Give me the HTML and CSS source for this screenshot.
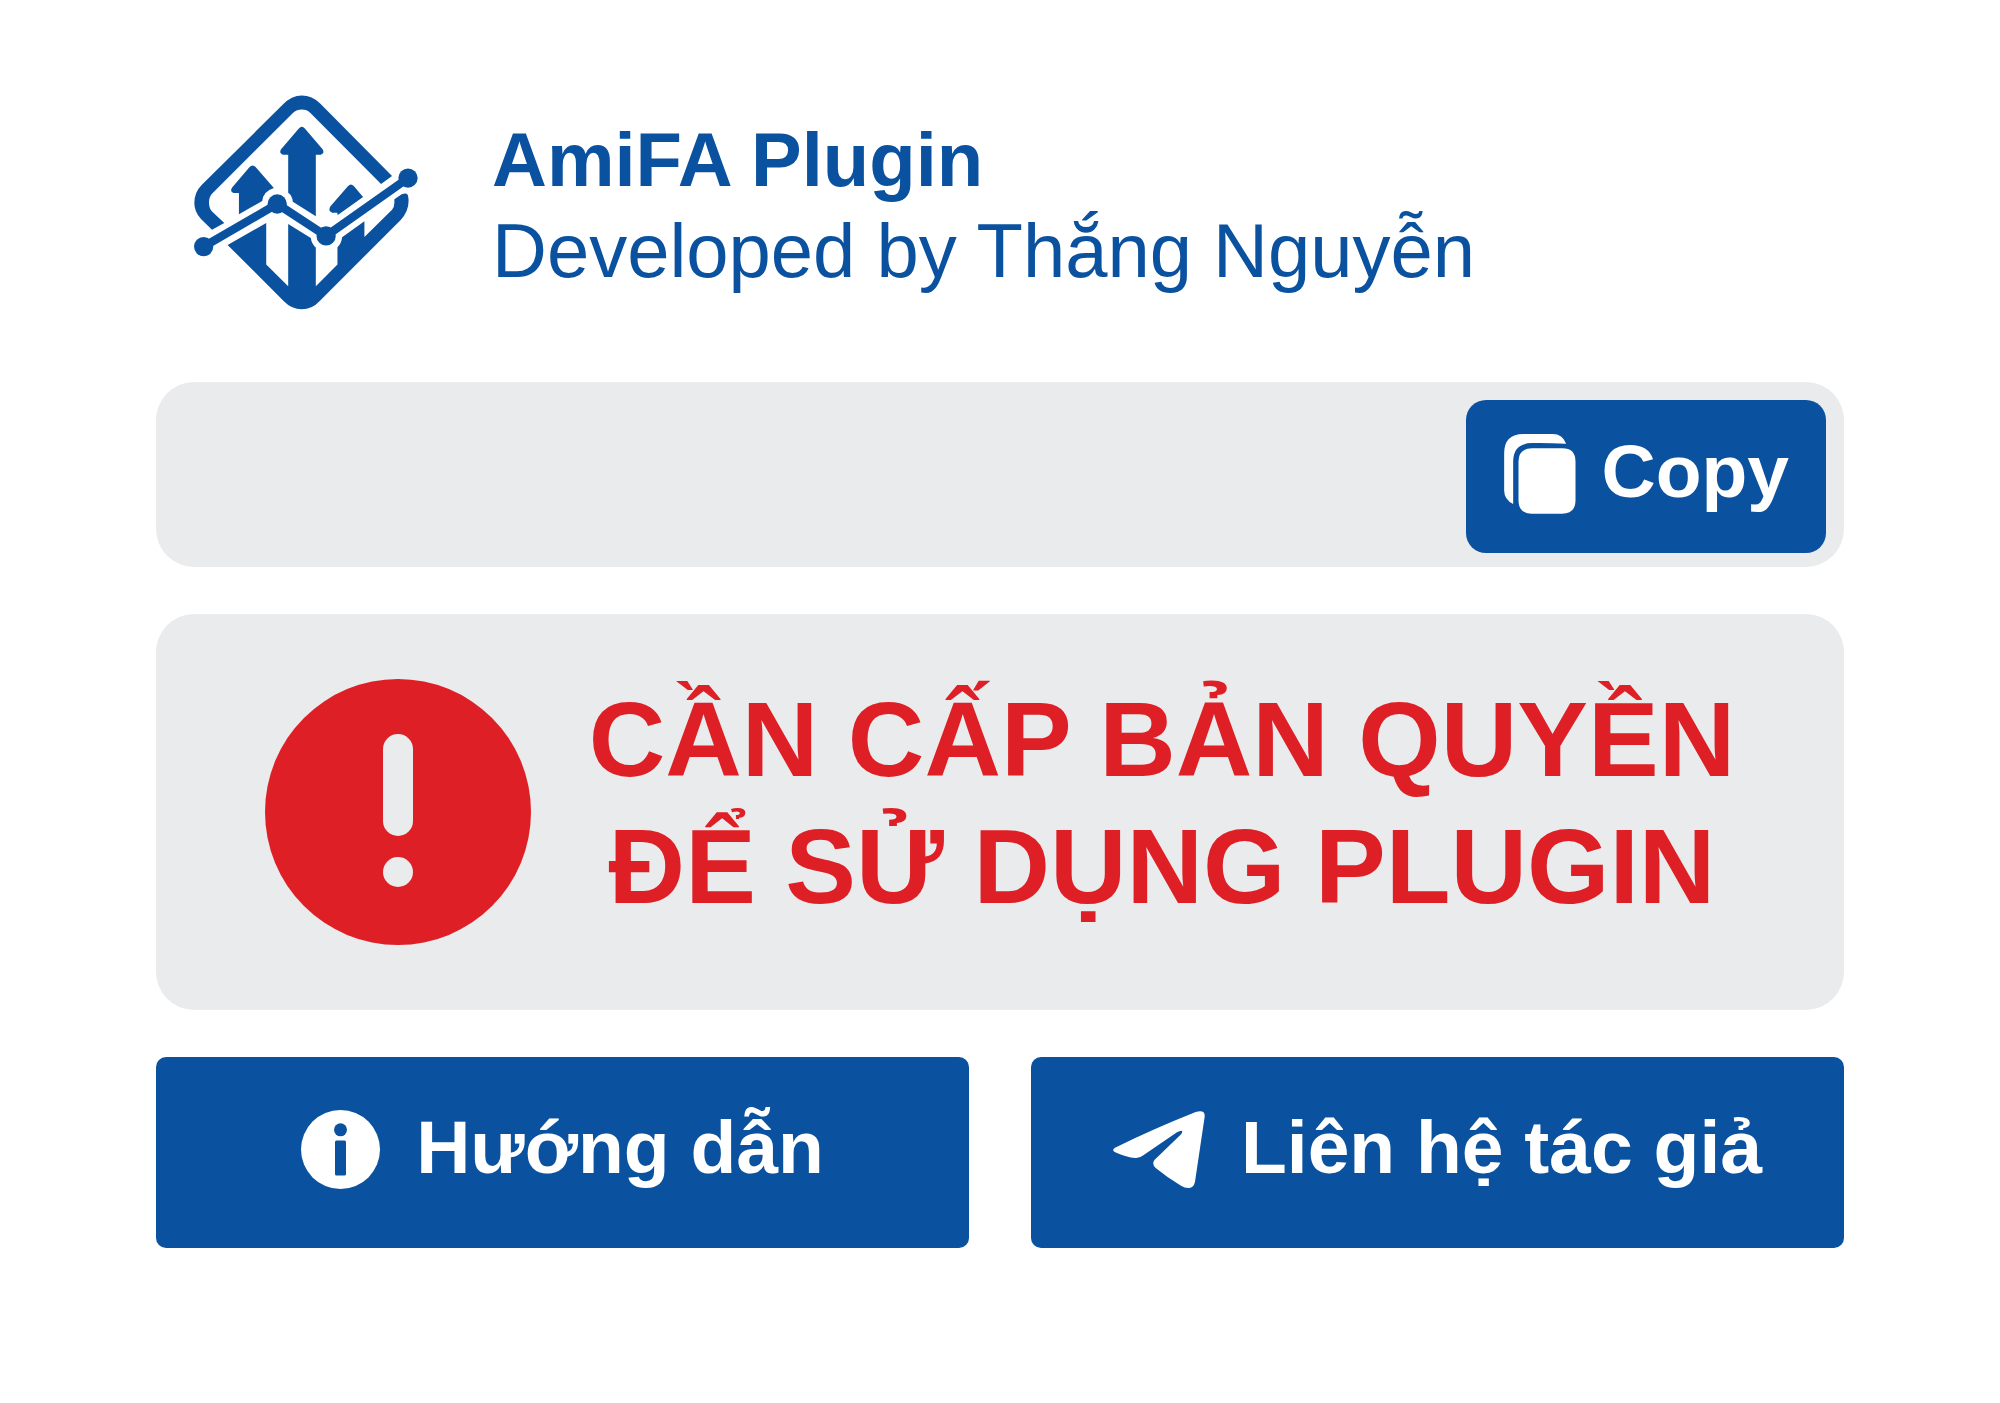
FILE: index.html
```html
<!DOCTYPE html>
<html lang="vi">
<head>
<meta charset="utf-8">
<meta name="viewport" content="width=device-width, initial-scale=1">
<title>AmiFA Plugin</title>
<link rel="stylesheet" href="styles.css">
</head>
<body>
<main class="page">
  <header class="header">
    <svg class="logo" viewBox="41 44 673 645" aria-hidden="true">
      <path d="M95 448L62 416Q42 395 42 368Q42 336 64 314L308 72Q334 45 365 45Q396 45 420 69L636 287L603 311L390 97Q380 87 365 87Q350 87 339 97L95 340Q86 350 86 367Q86 384 96 394L132 428Z"/>
      <path d="M142 494L258 428V553L324 618V431L392 473Q394 490 407 502V618L472 553V501Q484 490 486 471L553 423V470L636 388Q643 380 643 367V357L665 342Q682 335 684 346Q692 386 662 419L418 663Q396 687 365 687Q334 687 311 663Z"/>
      <path d="M324 223H308Q296 218 302 207L356 144Q365 134 374 144L428 207Q434 218 422 223H407V408L338 364Q336 345 324 337Z"/>
      <path d="M176 338H160Q148 334 155 322L208 260Q217 250 226 260L281 323Q249 333 246 362L176 402Z"/>
      <path d="M471 397H456Q442 392 451 378L504 317Q512 308 521 317L549 350L473 404Z"/>
      <path class="trend" d="M70 499L291 371L438 467L684 293"/>
      <circle cx="70" cy="499" r="29"/><circle cx="291" cy="371" r="29"/><circle cx="438" cy="467" r="29"/><circle cx="684" cy="293" r="29"/>
    </svg>
    <div class="titles">
      <h1 class="name">AmiFA Plugin</h1>
      <p class="author">Developed by Thắng Nguyễn</p>
    </div>
  </header>

  <div class="field">
    <input class="field-input" type="text" aria-label="Mã bản quyền" readonly>
    <button class="copy" type="button">
      <svg class="copy-icon" viewBox="192 192 215 240" aria-hidden="true">
        <path d="M219 402Q192 388 192 362V250Q192 192 250 192H338Q367 192 378 221Q320 218 275 219Q219 220 219 275Z"/>
        <path d="M275 235H366Q406 235 406 275V391Q406 431 366 431H275Q235 431 235 391V275Q235 235 275 235Z"/>
      </svg>
      <span class="label">Copy</span>
    </button>
  </div>

  <section class="alert" role="alert">
    <svg class="alert-icon" viewBox="0 0 266 266" aria-hidden="true">
      <circle class="disc" cx="133" cy="133" r="133"/>
      <rect class="mark" x="118" y="55" width="30" height="102" rx="15"/>
      <circle class="mark" cx="133" cy="193" r="15"/>
    </svg>
    <p class="alert-text">CẦN CẤP BẢN QUYỀN<br>ĐỂ SỬ DỤNG PLUGIN</p>
  </section>

  <nav class="actions">
    <button class="action" type="button">
      <svg class="info-icon" viewBox="0 0 79 79" aria-hidden="true">
        <circle cx="39.5" cy="39.5" r="39.5"/>
        <circle class="cutout" cx="39.5" cy="19.800" r="6.500"/>
        <rect class="cutout" x="34" y="30.500" width="11" height="35" rx="1.500"/>
      </svg>
      <span class="label">Hướng dẫn</span>
    </button>
    <button class="action" type="button">
      <svg class="send-icon" viewBox="60 96 276 231" aria-hidden="true">
        <path d="M66 206Q180 150 308 99Q337 91 335 113L306 308Q302 327 286 327Q275 327 264 320Q222 295 188 267Q175 254 185 242L262 168Q270 160 267 156Q263 154 252 160L151 229Q140 238 127 237Q100 234 70 221Q53 214 66 206Z"/>
      </svg>
      <span class="label">Liên hệ tác giả</span>
    </button>
  </nav>
</main>
</body>
</html>
```
FILE: styles.css
```css
:root {
  --blue: #0a529f;
  --red: #de2026;
  --gray: #eaebed;
}

* {
  box-sizing: border-box;
}

body {
  margin: 0;
  background: #fff;
  font-family: "Liberation Sans", Arial, sans-serif;
  color: var(--blue);
}

button {
  border: 0;
  margin: 0;
  font: inherit;
  font-size: 75px;
  font-weight: 700;
  color: #fff;
  background: var(--blue);
  cursor: pointer;
}

svg {
  display: block;
  flex: none;
  fill: currentColor;
}

.page {
  padding: 95px 156px;
}

.header {
  display: flex;
  align-items: center;
  gap: 74px;
  padding-left: 38px;
  margin-bottom: 72px;
}

.logo {
  width: 224px;
  height: 215px;
}

.trend {
  fill: none;
  stroke: currentColor;
  stroke-width: 25px;
}

.titles {
  padding-top: 4px;
  font-size: 76px;
  line-height: 91px;
}

.name,
.author {
  margin: 0;
  font-size: inherit;
}

.field {
  display: flex;
  padding: 18px 18px 14px;
  margin-bottom: 47px;
  border-radius: 38px;
  background: var(--gray);
}

.field-input {
  flex: 1;
  min-width: 0;
  border: 0;
  padding: 0 24px;
  background: transparent;
  font: inherit;
  font-size: 75px;
  color: var(--blue);
  outline: 0;
}

.label {
  padding-bottom: 6px;
}

.copy {
  display: flex;
  align-items: center;
  gap: 26px;
  height: 153px;
  padding: 0 37px 6px 38px;
  border-radius: 20px;
}

.copy-icon {
  width: 72px;
  height: 80px;
}

.alert {
  display: flex;
  align-items: center;
  justify-content: center;
  gap: 58px;
  padding: 62px 0;
  margin-bottom: 47px;
  border-radius: 38px;
  background: var(--gray);
}

.alert-icon {
  width: 266px;
  height: 266px;
}

.disc {
  fill: var(--red);
}

.mark {
  fill: var(--gray);
}

.cutout {
  fill: var(--blue);
}

.alert-text {
  margin: 0;
  padding-bottom: 18px;
  font-size: 106px;
  font-weight: 700;
  line-height: 127px;
  text-align: center;
  color: var(--red);
}

.actions {
  display: grid;
  grid-template-columns: 1fr 1fr;
  gap: 62px;
}

.action {
  display: flex;
  align-items: center;
  justify-content: center;
  gap: 36px;
  height: 191px;
  padding: 0 0 6px;
  border-radius: 10px;
}

.info-icon {
  width: 79px;
  height: 79px;
}

.send-icon {
  width: 92px;
  height: 77px;
}
```
